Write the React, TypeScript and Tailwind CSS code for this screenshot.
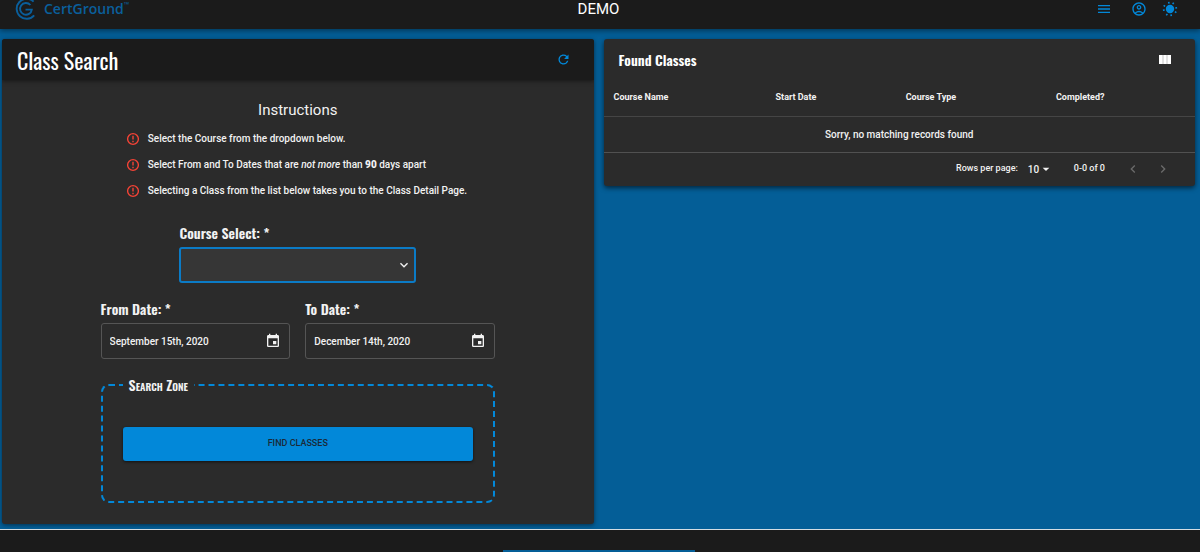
import { useState } from "react";
import {
  MdArrowDropDown,
  MdChevronLeft,
  MdChevronRight,
  MdEvent,
  MdKeyboardArrowDown,
  MdMenu,
  MdOutlineAccountCircle,
  MdRefresh,
} from "react-icons/md";

const heading = "font-['Oswald',sans-serif]";

function Logo() {
  return (
    <svg viewBox="0 0 24 24" className="size-6" fill="none" stroke="#0a5f9c" strokeWidth="1.9" aria-hidden="true">
      <path d="M19.6 4.6 A10 10 0 1 0 20.2 18.4" />
      <path d="M16.4 8 A5.9 5.9 0 1 0 17.8 12.6 H11.5" />
    </svg>
  );
}

function SunIcon() {
  return (
    <svg viewBox="0 0 16 16" className="size-4" fill="#0288d9" aria-hidden="true">
      <circle cx="8" cy="8" r="4.2" />
      <g stroke="#0288d9" strokeWidth="1.6">
        <path d="M6.7 .9l.3 1.8M11.7 1.6l-1 1.5M15.1 6.7l-1.8.3M14.4 11.7l-1.5-1M9.3 15.1l-.3-1.8M4.3 14.4l1-1.5M.9 9.3l1.8-.3M1.6 4.3l1.5 1" />
      </g>
    </svg>
  );
}

function AlertIcon() {
  return (
    <svg viewBox="0 0 14 14" className="size-[14px] shrink-0" fill="none" stroke="#f44336" strokeWidth="1.4" aria-hidden="true">
      <circle cx="7" cy="7" r="5.4" />
      <path d="M7 3.8v3.8M7 8.8v1.4" />
    </svg>
  );
}

function ColumnsIcon() {
  return (
    <svg viewBox="0 0 12 10" className="h-[10px] w-3" aria-hidden="true">
      <path fill="#fff" d="M0 0h12v9H0z" />
      <path stroke="#aaa" strokeWidth=".7" d="M4 0v9M8 0v9" />
    </svg>
  );
}

function Header() {
  return (
    <header className="relative z-10 grid h-[29px] grid-cols-3 items-start bg-[#1b1b1b] pr-[3px] shadow-[0_2px_5px_rgba(0,0,0,0.4)]">
      <a href="#home" className="-mt-[3px] flex items-center gap-1.5 pl-3.5 text-[#0a5f9c]">
        <Logo />
        <span className="flex font-['Open_Sans',sans-serif] text-[14px] leading-6 font-semibold">
          CertGround<span className="text-[7px] leading-4">™</span>
        </span>
      </a>
      <h1 className="text-center text-[15px] leading-[18px] text-white">DEMO</h1>
      <nav className="flex items-center justify-end gap-[15px] pt-px pr-[19px] text-[#0288d9]">
        <button aria-label="Menu" className="mr-1">
          <MdMenu className="size-4" />
        </button>
        <button aria-label="Account">
          <MdOutlineAccountCircle className="size-4" />
        </button>
        <button aria-label="Toggle theme">
          <SunIcon />
        </button>
      </nav>
    </header>
  );
}

function Instruction({ children }: { children: React.ReactNode }) {
  return (
    <li className="flex items-center gap-2">
      <AlertIcon />
      <span>{children}</span>
    </li>
  );
}

function DateField({ id, label, initial }: { id: string; label: string; initial: string }) {
  const [value, setValue] = useState(initial);
  return (
    <div className="min-w-0 flex-1">
      <label htmlFor={id} className={`${heading} block text-[14px] leading-5 font-semibold`}>
        {label}
      </label>
      <div className="mt-1 flex h-9 items-center rounded-[3px] border border-[#555] px-2">
        <input
          id={id}
          value={value}
          onChange={(e) => setValue(e.target.value)}
          className="min-w-0 flex-1 bg-transparent text-[10px] font-medium outline-none"
        />
        <button aria-label={`Choose ${label}`}>
          <MdEvent className="size-4" />
        </button>
      </div>
    </div>
  );
}

function SearchCard() {
  return (
    <section className="min-w-0 flex-1 overflow-hidden rounded-[3px] bg-[#2b2b2b] pb-[21px] shadow-[0_1px_4px_rgba(0,0,0,0.5)]">
      <div className="flex h-[41px] items-center justify-between bg-[#1b1b1b] pr-[23px] pl-[15px] shadow-[0_1px_4px_rgba(0,0,0,0.5)]">
        <h2 className={`${heading} pt-0.5 text-[22px] text-white`}>Class Search</h2>
        <button aria-label="Refresh" className="text-[#0288d9]">
          <MdRefresh className="size-[15px]" />
        </button>
      </div>

      <h3 className="mt-5 text-center text-[15px] leading-5">Instructions</h3>
      <ul className="mx-auto mt-[11px] flex w-[344px] flex-col gap-2.5 text-[10px] leading-4 font-medium whitespace-nowrap">
        <Instruction>Select the Course from the dropdown below.</Instruction>
        <Instruction>
          Select From and To Dates that are <em>not more</em> than <b className="font-black">90</b> days apart
        </Instruction>
        <Instruction>Selecting a Class from the list below takes you to the Class Detail Page.</Instruction>
      </ul>

      <form className="mx-auto mt-6 w-2/3" onSubmit={(e) => e.preventDefault()}>
        <div className="mx-auto w-3/5">
          <label htmlFor="course" className={`${heading} block text-[14px] leading-5 font-semibold`}>
            Course Select: *
          </label>
          <div className="relative mt-1">
            <select
              id="course"
              className="block h-9 w-full appearance-none rounded-[3px] border-2 border-[#0b7bc6] bg-[#363636] px-2 text-[10px] outline-none"
            >
              <option value=""></option>
            </select>
            <MdKeyboardArrowDown className="pointer-events-none absolute top-2.5 right-1 size-4" />
          </div>
        </div>

        <div className="mt-4 flex gap-[15px]">
          <DateField id="from" label="From Date: *" initial="September 15th, 2020" />
          <DateField id="to" label="To Date: *" initial="December 14th, 2020" />
        </div>

        <fieldset className="mt-4 rounded-[8px] border-2 border-dashed border-[#0288d9] px-5 pb-10">
          <legend className={`${heading} px-1.5 text-[14px] leading-5 font-semibold [font-variant:small-caps]`}>
            Search Zone
          </legend>
          <button
            type="submit"
            className="mt-8 block h-[34px] w-full rounded-[3px] bg-[#0288d9] text-[9px] font-medium text-[#1b2a38] shadow-[0_1px_3px_rgba(0,0,0,0.6)]"
          >
            FIND CLASSES
          </button>
        </fieldset>
      </form>
    </section>
  );
}

function ResultsCard() {
  return (
    <section className="min-w-0 flex-1 self-start rounded-[3px] bg-[#2b2b2b] shadow-[0_2px_5px_rgba(0,0,0,0.6)]">
      <div className="flex h-[41px] items-center justify-between pr-6 pl-[15px]">
        <h2 className={`${heading} text-[14px] font-semibold text-white`}>Found Classes</h2>
        <button aria-label="View columns">
          <ColumnsIcon />
        </button>
      </div>
      <table className="w-full table-fixed border-collapse">
        <thead>
          <tr className="h-9 border-b border-[#454545] text-left text-[9px]">
            <th className="w-[27.4%] pl-2.5 font-bold">Course Name</th>
            <th className="w-[22%] pl-2.5 font-bold">Start Date</th>
            <th className="w-[25.4%] pl-2.5 font-bold">Course Type</th>
            <th className="pl-2.5 font-bold">Completed?</th>
          </tr>
        </thead>
        <tbody>
          <tr className="h-9 border-b border-[#515151]">
            <td colSpan={4} className="text-center text-[10px] font-medium">
              Sorry, no matching records found
            </td>
          </tr>
        </tbody>
      </table>
      <div className="flex h-[33px] items-center justify-end pr-6 text-[9px] font-medium">
        <label htmlFor="rows">Rows per page:</label>
        <div className="relative ml-2.5 flex items-center">
          <select id="rows" className="w-6 appearance-none bg-transparent text-[10px] outline-none">
            <option>10</option>
          </select>
          <MdArrowDropDown className="pointer-events-none absolute -right-0.5 size-4" />
        </div>
        <span className="ml-[22px]">0-0 of 0</span>
        <button aria-label="Previous page" disabled className="ml-5 text-[#6b6b6b]">
          <MdChevronLeft className="size-4" />
        </button>
        <button aria-label="Next page" disabled className="ml-3.5 text-[#6b6b6b]">
          <MdChevronRight className="size-4" />
        </button>
      </div>
    </section>
  );
}

export default function App() {
  return (
    <div className="flex min-h-screen flex-col bg-[#045e97] font-['Roboto',sans-serif] text-[#f2f2f2]">
      <Header />
      <main className="flex gap-2.5 pt-2.5 pr-[5px] pb-[5px] pl-0.5">
        <SearchCard />
        <ResultsCard />
      </main>
      <footer className="flex flex-1 flex-col items-center border-t border-[#d5dde3] bg-[#1b1b1b] pt-5 pr-[3px]">
        <div className="h-0.5 w-48 bg-[#045e97]" />
      </footer>
    </div>
  );
}
